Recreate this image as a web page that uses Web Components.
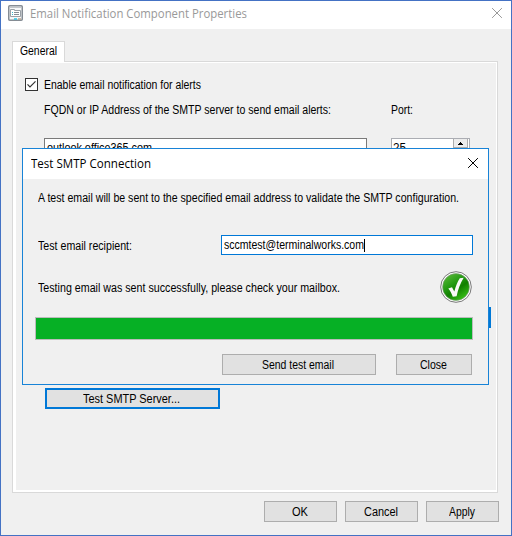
<!DOCTYPE html>
<html lang="en">
<head>
<meta charset="utf-8">
<title>Email Notification Component Properties</title>
<style>
    html, body {
        margin: 0;
        width: 512px;
        height: 536px;
        overflow: hidden;
    }
    body {
        font-family: "Liberation Sans", Arial, sans-serif;
        font-size: 12.5px;
        color: #000;
    }
</style>
</head>
<body>
<mail-properties></mail-properties>

<script>
// One line of text, condensed or stretched to the given width
class FitLabel extends HTMLElement {
    connectedCallback() {
        const width = Number(this.getAttribute('width'));
        this.attachShadow({ mode: 'open' });
        this.shadowRoot.innerHTML = `
            <style>
                :host {
                    display: block;
                    flex: none;
                    width: ${width}px;
                    height: 16px;
                    line-height: 16px;
                    white-space: nowrap;
                }
                span {
                    display: inline-block;
                    transform-origin: 0 0;
                }
            </style>
            <span><slot></slot></span>
        `;
        const span = this.shadowRoot.querySelector('span');
        span.style.transform = `scaleX(${width / span.getBoundingClientRect().width})`;
    }
}

class PushButton extends HTMLElement {
    connectedCallback() {
        this.attachShadow({ mode: 'open' });
        this.shadowRoot.innerHTML = `
            <style>
                :host {
                    display: flex;
                    flex: none;
                    box-sizing: border-box;
                    height: 21px;
                    padding-right: 2px;
                    justify-content: center;
                    align-items: center;
                    border: 1px solid #adadad;
                    background: #e1e1e1;
                }
                :host([default]) { border: 2px solid #0078d7; }
            </style>
            <slot></slot>
        `;
    }
}

class TextField extends HTMLElement {
    connectedCallback() {
        this.attachShadow({ mode: 'open' });
        this.shadowRoot.innerHTML = `
            <style>
                :host {
                    display: flex;
                    flex: none;
                    box-sizing: border-box;
                    height: 20px;
                    padding: 1px 0 0 2px;
                    border: 1px solid #7a7a7a;
                    background: #fff;
                }
                :host([focused]) { border-color: #0078d7; }
                .caret {
                    display: none;
                    width: 1px;
                    height: 13px;
                    margin-top: 2px;
                    background: #000;
                }
                :host([focused]) .caret { display: block; }
            </style>
            <slot></slot><div class="caret"></div>
        `;
    }
}

class SpinField extends HTMLElement {
    connectedCallback() {
        this.attachShadow({ mode: 'open' });
        this.shadowRoot.innerHTML = `
            <style>
                :host {
                    display: flex;
                    flex: none;
                    box-sizing: border-box;
                    justify-content: space-between;
                    width: 79px;
                    height: 20px;
                    padding-left: 1px;
                    border: 1px solid #abadb3;
                    background: #fff;
                }
                .value { padding-top: 1px; }
                .up {
                    box-sizing: border-box;
                    width: 15px;
                    height: 9px;
                    margin-right: 1px;
                    border: 1px solid #acacac;
                    border-top: 0;
                    background: #ececec;
                }
                svg { display: block; }
            </style>
            <div class="value"><slot></slot></div>
            <div class="up">
                <svg width="13" height="8" shape-rendering="crispEdges">
                    <path d="M6 3h1v1h1v1h1v1H4V5h1V4h1z"/>
                </svg>
            </div>
        `;
    }
}

class CloseGlyph extends HTMLElement {
    connectedCallback() {
        this.attachShadow({ mode: 'open' });
        this.shadowRoot.innerHTML = `
            <style>
                :host { display: block; width: 10px; height: 10px; }
                svg { display: block; }
            </style>
            <svg width="10" height="10">
                <path d="M.1.1l9.800 9.800M9.900.1L.1 9.900" fill="none" stroke="currentColor" stroke-width="1"/>
            </svg>
        `;
    }
}

class CheckBox extends HTMLElement {
    connectedCallback() {
        this.attachShadow({ mode: 'open' });
        this.shadowRoot.innerHTML = `
            <style>
                :host { display: flex; gap: 6px; height: 16px; }
                svg { display: block; margin-top: 2px; }
                slot { display: block; margin-top: 1px; }
            </style>
            <svg width="13" height="13">
                <rect x=".5" y=".5" width="12" height="12" fill="#fff" stroke="#333"/>
                <path d="M2.500 6.300L5 9l5.500-5.700" fill="none" stroke="#333" stroke-width="1.200"/>
            </svg>
            <slot></slot>
        `;
    }
}

class SuccessBadge extends HTMLElement {
    connectedCallback() {
        this.attachShadow({ mode: 'open' });
        this.shadowRoot.innerHTML = `
            <style>
                :host { display: block; width: 32px; height: 32px; margin-right: 1px; }
                svg { display: block; }
            </style>
            <svg width="32" height="32" viewBox="0 0 32 32">
                <defs>
                    <linearGradient id="ball" x1="0.1" y1="0" x2="0.8" y2="1">
                        <stop offset="0" stop-color="#5fbc3c"/>
                        <stop offset=".4" stop-color="#239a12"/>
                        <stop offset=".6" stop-color="#118000"/>
                        <stop offset="1" stop-color="#3cc91a"/>
                    </linearGradient>
                </defs>
                <circle cx="16" cy="16" r="15.300" fill="#fff" stroke="#777" stroke-width="1"/>
                <circle cx="16" cy="16" r="13.400" fill="url(#ball)" stroke="#7d967a" stroke-width=".6"/>
                <path d="M8.300 17.600l3.700-1.400 2.300 4.300C15.700 15.500 17.500 10.800 19.800 7.300l3.900-.6C20.300 12.300 18 18.500 16.600 25.300l-3.800.5C11.700 22.800 10.200 19.900 8.300 17.600z" fill="#f8f8f8"/>
            </svg>
        `;
    }
}

class SmtpDialog extends HTMLElement {
    connectedCallback() {
        this.attachShadow({ mode: 'open' });
        this.shadowRoot.innerHTML = `
            <style>
                :host {
                    display: block;
                    box-sizing: border-box;
                    width: 467px;
                    height: 237px;
                    border: 1px solid #1883d7;
                    background: #f0f0f0;
                }
                header {
                    display: flex;
                    box-sizing: border-box;
                    height: 30px;
                    justify-content: space-between;
                    padding: 7px 10px 0 8px;
                    background: #fff;
                    font-family: "Open Sans", "Noto Sans", sans-serif;
                    font-size: 12.5px;
                }
                close-glyph { margin-top: 2px; }
                main { padding: 11px 15px 0 12px; }
                .intro, .status fit-label { margin-left: 3px; }
                .recipient {
                    display: flex;
                    justify-content: space-between;
                    margin: 29px 0 0 3px;
                }
                .recipient > fit-label { margin-top: 3px; }
                .recipient text-field { width: 252px; }
                .status {
                    display: flex;
                    justify-content: space-between;
                    margin-top: 16px;
                }
                .status fit-label { margin-top: 9px; }
                .bar {
                    box-sizing: border-box;
                    height: 23px;
                    margin-top: 14px;
                    border: 1px solid #bcbcbc;
                    background: #06b025;
                }
                .buttons {
                    display: flex;
                    justify-content: flex-end;
                    gap: 20px;
                    margin: 14px 1px 0 0;
                }
            </style>
            <header>
                <fit-label width="120">Test SMTP Connection</fit-label>
                <close-glyph></close-glyph>
            </header>
            <main>
                <fit-label class="intro" width="421">A test email will be sent to the specified email address to validate the SMTP configuration.</fit-label>
                <div class="recipient">
                    <fit-label width="94">Test email recipient:</fit-label>
                    <text-field focused><fit-label width="140">sccmtest@terminalworks.com</fit-label></text-field>
                </div>
                <div class="status">
                    <fit-label width="302">Testing email was sent successfully, please check your mailbox.</fit-label>
                    <success-badge></success-badge>
                </div>
                <div class="bar"></div>
                <div class="buttons">
                    <push-button style="width:154px"><fit-label width="72">Send test email</fit-label></push-button>
                    <push-button style="width:76px"><fit-label width="27">Close</fit-label></push-button>
                </div>
            </main>
        `;
    }
}

class MailProperties extends HTMLElement {
    connectedCallback() {
        this.attachShadow({ mode: 'open' });
        this.shadowRoot.innerHTML = `
            <style>
                :host {
                    display: flex;
                    flex-direction: column;
                    position: relative;
                    box-sizing: border-box;
                    width: 512px;
                    height: 536px;
                    border: 1px solid #4472c4;
                    background: #f0f0f0;
                }
                header {
                    display: flex;
                    flex: none;
                    box-sizing: border-box;
                    height: 28px;
                    padding: 4px 9px 0 7px;
                    background: #fff;
                    color: #999;
                    font-family: "Open Sans", "Noto Sans", sans-serif;
                    font-size: 12.5px;
                }
                header svg { display: block; margin-right: 7px; }
                header fit-label { margin-top: 1px; }
                close-glyph { margin: 3px 0 0 auto; }
                .tab {
                    box-sizing: border-box;
                    width: 53px;
                    height: 21px;
                    margin: 12px 0 -1px 11px;
                    padding: 1px 0 0 7px;
                    border: 1px solid #d9d9d9;
                    border-bottom: 0;
                    background: #fff;
                    z-index: 1;
                }
                .page {
                    box-sizing: border-box;
                    width: 486px;
                    height: 432px;
                    margin-left: 11px;
                    padding: 14px 0 0 9px;
                    border: 1px solid #d9d9d9;
                    box-shadow: inset 3px 1px #fff, inset -1px -2px #fff;
                }
                .server {
                    display: grid;
                    grid-template-columns: 347px 79px;
                    row-gap: 20px;
                    margin: 10px 0 0 22px;
                }
                .server text-field { width: 323px; }
                .account {
                    width: 120px;
                    margin: 149px 6px 0 auto;
                }
                .test { width: 175px; margin: 60px 0 0 23px; }
                .buttons {
                    display: flex;
                    justify-content: flex-end;
                    gap: 8px;
                    margin: 8px 12px 0 0;
                }
                .buttons push-button { width: 73px; }
                smtp-dialog {
                    position: absolute;
                    left: 21px;
                    top: 147px;
                    z-index: 2;
                }
            </style>
            <header>
                <svg width="15" height="16">
                    <rect x=".75" y=".75" width="13.500" height="14.500" rx="1" fill="#f7f8f9" stroke="#858c94" stroke-width="1.500"/>
                    <path d="M2 2.500h11" stroke="#c4c8cc"/>
                    <path d="M2.500 4.500h4v1h6v6h-10z" fill="#fff" stroke="#9aa0a6"/>
                    <path d="M6 7.500h5M6 9.500h5" stroke="#858c94"/>
                    <path d="M4 7.500h1M4 9.500h1" stroke="#35b5cf"/>
                    <path d="M6 14h3" stroke="#28c4e4" stroke-width="1.500"/>
                    <path d="M10 14h3" stroke="#b9a48e" stroke-width="1.500"/>
                </svg>
                <fit-label width="217">Email Notification Component Properties</fit-label>
                <close-glyph></close-glyph>
            </header>
            <div class="tab"><fit-label width="37">General</fit-label></div>
            <div class="page">
                <check-box style="margin-left:3px"><fit-label width="157">Enable email notification for alerts</fit-label></check-box>
                <div class="server">
                    <fit-label width="287">FQDN or IP Address of the SMTP server to send email alerts:</fit-label>
                    <fit-label width="22">Port:</fit-label>
                    <text-field><fit-label width="105">outlook.office365.com</fit-label></text-field>
                    <spin-field><fit-label width="13">25</fit-label></spin-field>
                </div>
                <push-button class="account" default></push-button>
                <push-button class="test" default><fit-label width="97">Test SMTP Server...</fit-label></push-button>
            </div>
            <div class="buttons">
                <push-button><fit-label width="16">OK</fit-label></push-button>
                <push-button><fit-label width="34">Cancel</fit-label></push-button>
                <push-button><fit-label width="26">Apply</fit-label></push-button>
            </div>
            <smtp-dialog></smtp-dialog>
        `;
    }
}

customElements.define('fit-label', FitLabel);
customElements.define('push-button', PushButton);
customElements.define('text-field', TextField);
customElements.define('spin-field', SpinField);
customElements.define('close-glyph', CloseGlyph);
customElements.define('check-box', CheckBox);
customElements.define('success-badge', SuccessBadge);
customElements.define('smtp-dialog', SmtpDialog);
customElements.define('mail-properties', MailProperties);
</script>
</body>
</html>
